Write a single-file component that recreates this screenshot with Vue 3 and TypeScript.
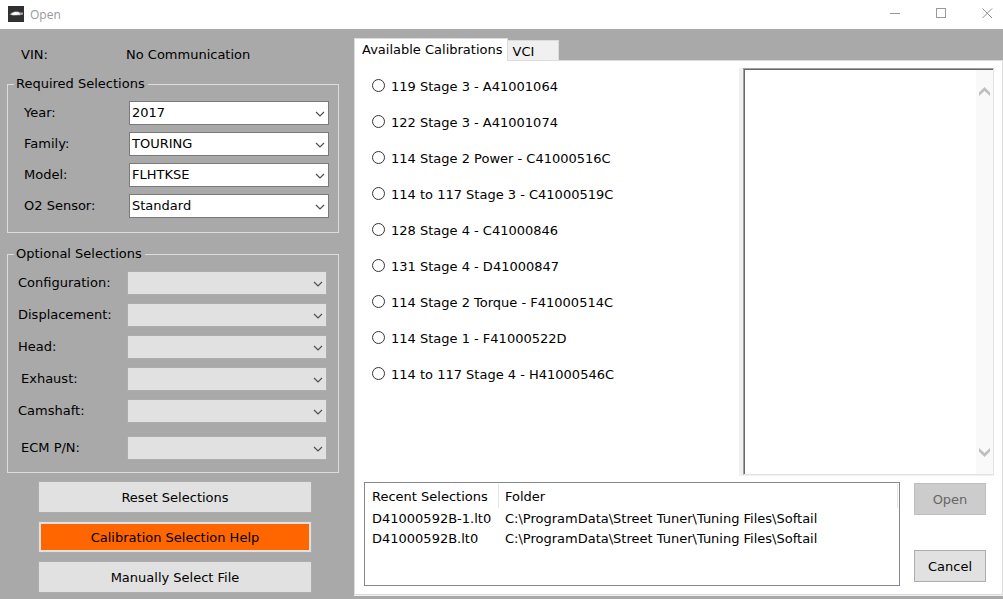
<script setup lang="ts">
import { ref } from 'vue'

interface Field {
  id: string
  label: string
  value: string
  inset?: boolean
}

const required = ref<Field[]>([
  { id: 'year', label: 'Year:', value: '2017' },
  { id: 'family', label: 'Family:', value: 'TOURING' },
  { id: 'model', label: 'Model:', value: 'FLHTKSE' },
  { id: 'o2', label: 'O2 Sensor:', value: 'Standard' },
])

const optional: Field[] = [
  { id: 'configuration', label: 'Configuration:', value: '' },
  { id: 'displacement', label: 'Displacement:', value: '' },
  { id: 'head', label: 'Head:', value: '' },
  { id: 'exhaust', label: 'Exhaust:', value: '', inset: true },
  { id: 'camshaft', label: 'Camshaft:', value: '' },
]

const calibrations: string[] = [
  '119 Stage 3 - A41001064',
  '122 Stage 3 - A41001074',
  '114 Stage 2 Power - C41000516C',
  '114 to 117 Stage 3 - C41000519C',
  '128 Stage 4 - C41000846',
  '131 Stage 4 - D41000847',
  '114 Stage 2 Torque - F41000514C',
  '114 Stage 1 - F41000522D',
  '114 to 117 Stage 4 - H41000546C',
]

const recent = [
  { file: 'D41000592B-1.lt0', folder: 'C:\\ProgramData\\Street Tuner\\Tuning Files\\Softail' },
  { file: 'D41000592B.lt0', folder: 'C:\\ProgramData\\Street Tuner\\Tuning Files\\Softail' },
]

const selected = ref('')
</script>

<template>
  <div class="window">
    <header class="titlebar">
      <svg class="app-icon" width="16" height="16" viewBox="0 0 16 16" aria-hidden="true">
        <rect width="16" height="16" fill="#303030" />
        <path d="M1.5 8.4 L4 6.4 L7 5.4 L10 5.6 L12 6.6 L15 6.4 L15 8.6 L12 9.2 L5 9.4 Z" fill="#a8a4a4" />
        <path d="M3 8 L7 6 L11 6.4 L12 8.6 L5 8.9 Z" fill="#fff" />
      </svg>
      <span class="title">Open</span>
      <div class="window-buttons">
        <button type="button" aria-label="Minimize">
          <svg width="11" height="11" viewBox="0 0 11 11"><path d="M0 5.5H10" stroke="#999" fill="none" /></svg>
        </button>
        <button type="button" aria-label="Maximize">
          <svg width="11" height="11" viewBox="0 0 11 11"><rect x=".5" y=".5" width="9" height="9" stroke="#999" fill="none" /></svg>
        </button>
        <button type="button" aria-label="Close">
          <svg width="11" height="11" viewBox="0 0 11 11"><path d="M.5 .5L10 10M10 .5L.5 10" stroke="#8c8c8c" fill="none" /></svg>
        </button>
      </div>
    </header>

    <main class="body">
      <aside class="sidebar">
        <div class="vin">
          <span>VIN:</span>
          <span>No Communication</span>
        </div>

        <fieldset class="group required">
          <legend>Required Selections</legend>
          <div v-for="f in required" :key="f.id" class="field">
            <label :for="f.id">{{ f.label }}</label>
            <span class="combo">
              <select :id="f.id" v-model="f.value">
                <option>{{ f.value }}</option>
              </select>
              <svg class="chevron" width="10" height="6" viewBox="0 0 10 6"><path d="M1 1L5 5L9 1" /></svg>
            </span>
          </div>
        </fieldset>

        <fieldset class="group optional">
          <legend>Optional Selections</legend>
          <div v-for="f in optional" :key="f.id" class="field">
            <label :for="f.id" :class="{ inset: f.inset }">{{ f.label }}</label>
            <span class="combo">
              <select :id="f.id" disabled></select>
              <svg class="chevron" width="10" height="6" viewBox="0 0 10 6"><path d="M1 1L5 5L9 1" /></svg>
            </span>
          </div>
          <div class="field part-number">
            <label for="ecm" class="inset">ECM P/N:</label>
            <span class="combo">
              <select id="ecm" disabled></select>
              <svg class="chevron" width="10" height="6" viewBox="0 0 10 6"><path d="M1 1L5 5L9 1" /></svg>
            </span>
          </div>
        </fieldset>

        <div class="actions">
          <button type="button" class="btn">Reset Selections</button>
          <button type="button" class="btn help">Calibration Selection Help</button>
          <button type="button" class="btn">Manually Select File</button>
        </div>
      </aside>

      <section class="content">
        <div class="tabs" role="tablist">
          <button type="button" role="tab" aria-selected="true" class="tab active">Available Calibrations</button>
          <button type="button" role="tab" aria-selected="false" class="tab">VCI</button>
        </div>

        <div class="panel" role="tabpanel">
          <div class="upper">
            <div class="calibrations" role="radiogroup" aria-label="Available Calibrations">
              <label v-for="c in calibrations" :key="c" class="calibration">
                <input v-model="selected" type="radio" name="calibration" :value="c" />
                <span>{{ c }}</span>
              </label>
            </div>
            <div class="details">
              <div class="details-box">
                <textarea readonly aria-label="Calibration details"></textarea>
                <div class="scrollbar">
                  <svg width="11" height="9" viewBox="0 0 11 9"><path d="M0 5.5L5.5 0L11 5.5V9L5.5 4L0 9Z" /></svg>
                  <svg width="11" height="9" viewBox="0 0 11 9"><path d="M0 3.5L5.5 9L11 3.5V0L5.5 5L0 0Z" /></svg>
                </div>
              </div>
            </div>
          </div>

          <div class="lower">
            <div class="recent">
              <table>
                <thead>
                  <tr>
                    <th class="file-col">Recent Selections</th>
                    <th>Folder</th>
                  </tr>
                </thead>
                <tbody>
                  <tr v-for="r in recent" :key="r.file">
                    <td>{{ r.file }}</td>
                    <td>{{ r.folder }}</td>
                  </tr>
                </tbody>
              </table>
            </div>
            <div class="dialog-buttons">
              <button type="button" class="btn" disabled>Open</button>
              <button type="button" class="btn">Cancel</button>
            </div>
          </div>
        </div>
      </section>
    </main>
  </div>
</template>

<style>
body {
  margin: 0;
  background: #a9a9a9;
}
</style>

<style scoped>
.window,
.window * {
  box-sizing: border-box;
}

.window {
  display: flex;
  flex-direction: column;
  min-height: 100vh;
  background: #a9a9a9;
  color: #000;
  font-family: Verdana, "DejaVu Sans", sans-serif;
  font-size: 13px;
  line-height: 16px;
}

button,
select,
textarea {
  font: inherit;
  color: inherit;
  margin: 0;
  border-radius: 0;
}

.titlebar {
  display: flex;
  align-items: center;
  height: 29px;
  padding-left: 8px;
  background: #fff;
}

.app-icon {
  margin-bottom: 2px;
}

.title {
  margin-left: 6px;
  color: #999;
  font-family: "Open Sans", sans-serif;
  font-size: 12px;
}

.window-buttons {
  display: flex;
  gap: 14px;
  margin-left: auto;
}

.window-buttons button {
  display: flex;
  align-items: center;
  justify-content: center;
  width: 32px;
  height: 28px;
  padding: 0 0 2px;
  border: 0;
  background: none;
}

.body {
  display: flex;
  flex: 1;
}

.sidebar {
  flex: 0 0 354px;
  padding: 18px 15px 6px 7px;
}

.vin {
  display: grid;
  grid-template-columns: 105px 1fr;
  padding-left: 14px;
}

.group {
  min-width: 0;
  margin: 13px 0 0;
  border: 1px solid #dcdcdc;
}

.group legend {
  padding: 0 3px 0 2px;
}

.required {
  padding: 9px 9px 14px 16px;
}

.optional {
  padding: 9px 11px 12px 10px;
}

.required legend {
  margin-left: -10px;
}

.optional legend {
  margin-left: -4px;
}

.field {
  display: flex;
  align-items: center;
  justify-content: space-between;
}

.required .field + .field {
  margin-top: 7px;
}

.optional .field + .field {
  margin-top: 8px;
}

.optional .field + .part-number {
  margin-top: 13px;
}

.inset {
  padding-left: 3px;
}

.combo {
  position: relative;
  flex: 0 0 200px;
  height: 24px;
}

.combo select {
  display: block;
  width: 100%;
  height: 100%;
  padding: 0 20px 0 2px;
  border: 1px solid #7a7a7a;
  background: #fff;
  appearance: none;
}

.combo select:disabled {
  border-color: #adadad;
  background: #e1e1e1;
  opacity: 1;
}

.chevron {
  position: absolute;
  top: 10px;
  right: 4px;
  pointer-events: none;
  fill: none;
  stroke: #505050;
  stroke-width: 1.2;
}

.btn {
  height: 32px;
  padding: 2px 8px 0;
  border: 1px solid #adadad;
  background: #e1e1e1;
}

.actions {
  display: flex;
  flex-direction: column;
  gap: 8px;
  margin: 8px 27px 0 31px;
}

.help {
  background: #f60;
  box-shadow: inset 0 0 0 2px #e1e1e1;
}

.content {
  display: flex;
  flex: 1;
  flex-direction: column;
  min-width: 0;
  padding: 9px 0 4px;
}

.tabs {
  display: flex;
  align-items: flex-end;
}

.tab {
  min-width: 51px;
  height: 20px;
  padding: 3px 4px 0;
  border: 1px solid #dcdcdc;
  border-width: 1px 1px 0 0;
  background: #f0f0f0;
  text-align: left;
}

.tab.active {
  position: relative;
  height: 23px;
  margin-bottom: -1px;
  padding: 0 5px 0 7px;
  border-width: 1px 1px 0 1px;
  background: #fff;
}

.panel {
  display: flex;
  flex: 1;
  flex-direction: column;
  gap: 6px;
  padding: 7px 8px 8px 9px;
  border: 1px solid #dcdcdc;
  background: #fff;
  box-shadow: 0 1px #f0f0f0;
}

.upper {
  display: grid;
  flex: 1;
  grid-template-columns: minmax(0, 375fr) minmax(0, 255fr);
}

.calibrations {
  padding-left: 8px;
}

.calibration {
  display: flex;
  align-items: center;
  gap: 6px;
  height: 36px;
}

.calibration span {
  padding-top: 2px;
}

.calibration input {
  width: 13px;
  height: 13px;
  margin: 0 0 2px;
  border: 1px solid #333;
  border-radius: 50%;
  background: #fff;
  appearance: none;
}

.calibration input:checked {
  background: radial-gradient(circle, #333 3px, #fff 4px);
}

.details {
  display: flex;
  padding: 0 0 1px 4px;
  background: #f0f0f0;
}

.details-box {
  display: flex;
  flex: 1;
  border: 1px solid;
  border-color: #a0a0a0 #e3e3e3 #e3e3e3 #a0a0a0;
  background: #fff;
  box-shadow: inset 1px 1px #696969;
}

.details textarea {
  flex: 1;
  min-width: 0;
  padding: 4px;
  border: 0;
  outline: 0;
  background: none;
  resize: none;
}

.scrollbar {
  display: flex;
  flex-direction: column;
  align-items: center;
  justify-content: space-between;
  width: 17px;
  margin-top: 1px;
  padding: 17px 0;
  background: #f9f9f9;
}

.scrollbar svg {
  fill: #bfbfbf;
}

.lower {
  display: flex;
  gap: 14px;
  padding-right: 8px;
}

.recent {
  flex: 1;
  min-width: 0;
  min-height: 104px;
  padding: 1px;
  border: 1px solid #828790;
}

table {
  width: 100%;
  border-collapse: separate;
  border-spacing: 0;
}

th,
td {
  height: 20px;
  padding: 2px 6px 0;
  font-weight: normal;
  text-align: left;
  white-space: nowrap;
}

th {
  height: 24px;
  border-right: 1px solid #e5e5e5;
}

.file-col {
  width: 133px;
}

.dialog-buttons {
  display: flex;
  flex: 0 0 72px;
  flex-direction: column;
  justify-content: space-between;
  padding: 1px 0 4px;
}

.dialog-buttons .btn:disabled {
  border-color: #bfbfbf;
  background: #ccc;
  color: #666;
}
</style>
